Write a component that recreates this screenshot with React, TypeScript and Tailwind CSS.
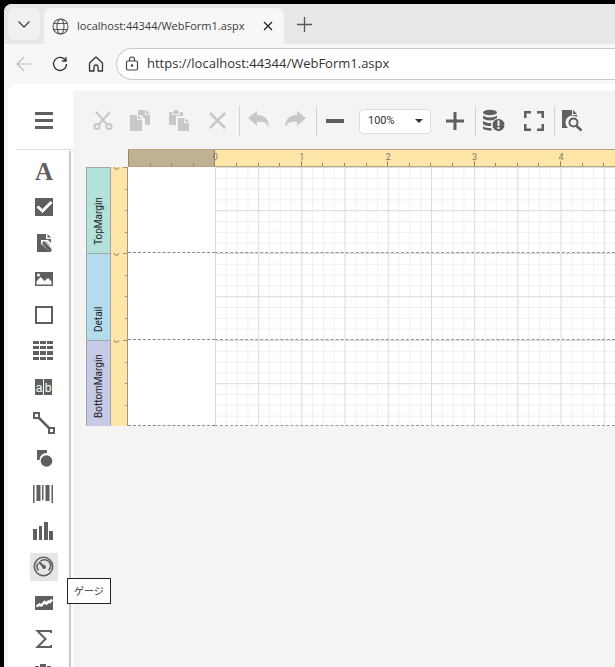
import type { ReactNode } from "react";

type IconProps = { children: ReactNode };

function Icon({ children }: IconProps) {
  return (
    <svg
      aria-hidden="true"
      width="28"
      height="28"
      viewBox="0 0 28 28"
      fill="currentColor"
      className="shrink-0"
    >
      {children}
    </svg>
  );
}

const tools: { label: string; icon: ReactNode }[] = [
  {
    label: "ラベル",
    icon: (
      <text x="14" y="23" textAnchor="middle" className="font-['Liberation_Serif',serif] text-[25px] font-bold">
        A
      </text>
    ),
  },
  {
    label: "チェックボックス",
    icon: (
      <>
        <path d="M5 5h18v18H5z" />
        <path d="M7.500 13.500l5 4.500 9-9" fill="none" stroke="#fff" strokeWidth="3" />
      </>
    ),
  },
  {
    label: "リッチテキスト",
    icon: (
      <>
        <path d="M7 5h9v5h5v13H7z" />
        <path d="M17.500 5l3.500 3.500h-3.500z" />
        <path d="M11 11h7l5 5v7h-2L11 15z" fill="#fff" />
        <path d="M12.500 12.500h4l5 6.500v3.500h-1.500l-7.500-7z" />
        <path d="M15 12.500l7 7.500" stroke="#fff" strokeWidth="1" />
      </>
    ),
  },
  {
    label: "ピクチャボックス",
    icon: (
      <>
        <path d="M5 7h18v14H5z" />
        <path d="M6.500 19.500v-3l4-4.500 4 4 3.500-3 3.500 3.500v3z" fill="#fff" />
        <circle cx="8.500" cy="10" r="1.500" fill="#fff" />
      </>
    ),
  },
  { label: "パネル", icon: <path d="M6 6h16v16H6z" fill="none" stroke="currentColor" strokeWidth="2" /> },
  {
    label: "テーブル",
    icon: (
      <path d="M3 4h6v3H3zM10 4h6v3h-6zM17 4h6v3h-6zM3 9h6v3H3zM10 9h6v3h-6zM17 9h6v3h-6zM3 14h6v4H3zM10 14h6v4h-6zM17 14h6v4h-6zM3 20h6v3H3zM10 20h6v3h-6zM17 20h6v3h-6z" />
    ),
  },
  {
    label: "文字コーム",
    icon: (
      <>
        <path d="M5 6h8v16H5zM14 6h8v16h-8z" />
        <g fill="#fff" textAnchor="middle" className="font-['Liberation_Sans',sans-serif] text-[12px]">
          <text x="9" y="19">a</text>
          <text x="18" y="19">b</text>
        </g>
      </>
    ),
  },
  {
    label: "ライン",
    icon: (
      <g fill="none" stroke="currentColor" strokeWidth="2">
        <path d="M4 4h5v5H4zM19 19h5v5h-5z" />
        <path d="M9 9l10 10" strokeWidth="2.500" />
      </g>
    ),
  },
  {
    label: "シェイプ",
    icon: (
      <>
        <path d="M7 5h10v3a7 7 0 0 0-7.500 7H7z" />
        <circle cx="16.500" cy="16" r="5.800" />
      </>
    ),
  },
  {
    label: "バーコード",
    icon: <path d="M3 4h1.500v18H3zM6.500 4h4v16h-4zM12 4h1.500v15H12zM15.500 4h4v16h-4zM21.500 4H23v18h-1.500z" />,
  },
  {
    label: "チャート",
    icon: <path d="M3 12h4v11H3zM9 9h3v14H9zM14 5h4v18h-4zM19 14h4v9h-4z" />,
  },
  {
    label: "ゲージ",
    icon: (
      <g fill="none" stroke="currentColor" strokeWidth="1.600">
        <circle cx="13.500" cy="13.500" r="9.200" />
        <path d="M8.500 17.500a6 6 0 0 1-.5-7M10.500 8.200a6 6 0 0 1 8 9.300" />
        <path d="M9 9l5 5" strokeWidth="2.400" />
        <circle cx="14" cy="14" r="1.200" fill="currentColor" />
      </g>
    ),
  },
  {
    label: "スパークライン",
    icon: (
      <>
        <path d="M5 7h18v14H5z" />
        <path d="M6.500 17.500l3-2 2 1 3-3.500 2 1.500 2-2 1.500.5 2-2.500" fill="none" stroke="#fff" strokeWidth="2.600" />
      </>
    ),
  },
  {
    label: "ピボットグリッド",
    icon: <path d="M21 8V6H7.500l8 8-8 8H21v-2" fill="none" stroke="currentColor" strokeWidth="2" />,
  },
  { label: "サブレポート", icon: <path d="M10 3h6v4h-6zM5 5h4v4H5zM17 5h4v4h-4zM4 10h18v12H4z" /> },
];

type ToolButtonProps = { label: string; muted?: boolean; children: ReactNode };

function ToolButton({ label, muted = false, children }: ToolButtonProps) {
  return (
    <button
      type="button"
      aria-label={label}
      disabled={muted}
      className={muted ? "text-[#c8c8c8]" : "text-[#5f5f5f]"}
    >
      <Icon>{children}</Icon>
    </button>
  );
}

function Separator() {
  return <span className="h-[30px] w-px bg-[#d3d3d3]" />;
}

function BrowserChrome() {
  return (
    <header className="shrink-0 font-['Open_Sans','Noto_Sans',sans-serif]">
      <div className="flex h-10 items-end bg-[#e8e8e8]">
        <div className="self-stretch rounded-br-lg pt-1 pl-1">
          <button
            type="button"
            aria-label="タブ検索"
            className="flex h-8 w-8 items-center justify-center rounded-lg bg-[#f1f1f1] text-[#444]"
          >
            <svg width="14" height="14" viewBox="0 0 14 14" fill="none" stroke="currentColor" strokeWidth="1.300">
              <path d="M1.500 4.500L7 10l5.500-5.500" />
            </svg>
          </button>
        </div>
        <div className="ml-1 flex h-9 w-60 items-center rounded-t-lg bg-[#f7f7f7] px-2">
          <svg width="17" height="17" viewBox="0 0 17 17" fill="none" stroke="#555" strokeWidth="1.100" className="shrink-0">
            <circle cx="8.500" cy="8.500" r="7.500" />
            <ellipse cx="8.500" cy="8.500" rx="3.500" ry="7.500" />
            <path d="M1.700 5.500h13.600M1.700 11.500h13.600" />
          </svg>
          <span className="ml-2 flex-1 text-[11px] whitespace-nowrap text-[#3b3b3b]">localhost:44344/WebForm1.aspx</span>
          <button type="button" aria-label="タブを閉じる" className="flex h-4 w-4 items-center justify-center">
            <svg width="10" height="10" viewBox="0 0 10 10" stroke="#222" strokeWidth="1.300">
              <path d="M1 1l8 8M9 1L1 9" />
            </svg>
          </button>
        </div>
        <button type="button" aria-label="新しいタブ" className="flex h-10 w-10 items-center justify-center">
          <svg width="15" height="15" viewBox="0 0 15 15" stroke="#555" strokeWidth="1.300">
            <path d="M7.500 0v15M0 7.500h15" />
          </svg>
        </button>
      </div>

      <div className="flex h-10 items-center">
        <div className="flex w-28 shrink-0 items-center justify-between px-3">
          <button type="button" aria-label="戻る" disabled>
            <svg width="16" height="16" viewBox="0 0 16 16" fill="none" stroke="#bdbdbd" strokeWidth="1.200">
              <path d="M16 8H1M8 1L1 8l7 7" />
            </svg>
          </button>
          <button type="button" aria-label="更新">
            <svg width="16" height="16" viewBox="0 0 16 16" fill="none" stroke="#333" strokeWidth="1.300">
              <path d="M13.500 4.500A6.500 6.500 0 1 0 14.500 8M14 1v4h-4" />
            </svg>
          </button>
          <button type="button" aria-label="ホーム">
            <svg width="16" height="16" viewBox="0 0 16 16" fill="none" stroke="#333" strokeWidth="1.300" strokeLinejoin="round">
              <path d="M1.500 7L8 1l6.500 6v8H10v-4a2 2 0 0 0-4 0v4H1.500z" />
            </svg>
          </button>
        </div>
        <label className="flex h-8 flex-1 items-center rounded-l-full border border-r-0 border-[#c9c9c9] bg-white pl-2">
          <svg width="14" height="16" viewBox="0 0 14 16" fill="none" stroke="#444" strokeWidth="1.200">
            <rect x="1.500" y="5" width="11" height="9" rx="1.500" />
            <path d="M4.500 5V3.500a2.500 2.500 0 0 1 5 0V5" />
            <circle cx="7" cy="9.500" r=".7" fill="#444" />
          </svg>
          <input
            aria-label="アドレス"
            defaultValue="https://localhost:44344/WebForm1.aspx"
            className="ml-2 min-w-0 flex-1 bg-transparent text-[13px] text-[#333] outline-none"
          />
        </label>
      </div>
    </header>
  );
}

function Toolbox() {
  return (
    <nav aria-label="ツールボックス" className="flex w-[65px] shrink-0 flex-col">
      <div className="ml-2 flex h-[66px] shrink-0 items-center border-b border-[#dedede] pt-2 pl-3.5">
        <ToolButton label="メニュー">
          <path d="M5 5h18v3H5zM5 12h18v3H5zM5 19h18v3H5z" />
        </ToolButton>
      </div>
      <div className="mt-px mr-0.5 flex min-h-0 flex-1 flex-col gap-2 border-r-2 border-[#c8c8c8] pt-1.5 pl-[22px]">
        {tools.map((tool) => (
          <button
            key={tool.label}
            type="button"
            aria-label={tool.label}
            className={
              tool.label === "ゲージ"
                ? "h-7 w-7 shrink-0 bg-[#e6e6e6] text-[#5f5f5f]"
                : "h-7 w-7 shrink-0 text-[#5f5f5f]"
            }
          >
            <Icon>{tool.icon}</Icon>
          </button>
        ))}
      </div>
    </nav>
  );
}

function Toolbar() {
  return (
    <div className="flex h-[58px] shrink-0 items-center pt-0.5 pl-4">
      <div className="flex gap-2.5">
        <ToolButton label="切り取り" muted>
          <g fill="none" stroke="currentColor" strokeWidth="2">
            <circle cx="8" cy="19.500" r="2.600" />
            <circle cx="20" cy="19.500" r="2.600" />
            <path d="M7 5l11.500 13M21 5L9.500 18" />
          </g>
        </ToolButton>
        <ToolButton label="コピー" muted>
          <path d="M11 3h7v5h5v10h-5v-6l-4-4h-3z" />
          <path d="M19 3l4 4h-4zM3 8h7v5h5v11H3zM11 8l4 4h-4z" />
        </ToolButton>
        <ToolButton label="貼り付け" muted>
          <path d="M4 5h3v3h8V5h3v4h-7v9H4zM9 3h4v2h1v2H8V5h1z" />
          <path d="M13 11h6v5h5v8H13zM20 11l4 4h-4z" />
        </ToolButton>
        <ToolButton label="削除" muted>
          <path d="M7 6l15 15M22 6L7 21" fill="none" stroke="currentColor" strokeWidth="2.500" />
        </ToolButton>
      </div>
      <div className="mr-1 ml-2 flex items-center gap-2">
        <Separator />
        <div className="flex gap-2">
          <ToolButton label="元に戻す" muted>
            <path d="M0 11l9-7v4c7 0 12 4 12 12-3-5-6-6-12-5v4z" />
          </ToolButton>
          <ToolButton label="やり直し" muted>
            <path d="M22 11l-9-7v4C6 8 1 12 1 20c3-5 6-6 12-5v4z" />
          </ToolButton>
        </div>
      </div>
      <Separator />
      <div className="flex items-center gap-2.5 pr-1.5 pl-1">
        <ToolButton label="縮小">
          <path d="M5 12h18v4H5z" />
        </ToolButton>
        <div className="relative">
          <select
            aria-label="ズーム"
            defaultValue="100%"
            className="block h-[25px] w-[72px] appearance-none rounded-sm border border-[#ddd] bg-white pl-2 font-['Roboto',sans-serif] text-[11px] text-[#333]"
          >
            <option>100%</option>
          </select>
          <svg aria-hidden="true" width="8" height="4" viewBox="0 0 8 4" className="pointer-events-none absolute top-2.5 right-2">
            <path d="M0 0h8L4 4z" fill="#333" />
          </svg>
        </div>
        <ToolButton label="拡大">
          <path d="M12.500 5h3v7.500H23v3h-7.500V23h-3v-7.500H5v-3h7.500z" />
        </ToolButton>
      </div>
      <Separator />
      <div className="flex gap-3 pr-1.5 pl-1">
        <ToolButton label="検証">
          <ellipse cx="10" cy="5.500" rx="7" ry="2.800" />
          <path d="M3 8.500c3 2.500 11 2.500 14 0v3c-3 2.500-11 2.500-14 0zM3 14c2 1.500 5 2 8 2v3c-4 0-7-.500-8-2zM3 19.500c2 1.500 5 1.500 8 1.500l1 2.500c-4 0-8-.500-9-2z" />
          <circle cx="18.500" cy="18" r="6.500" stroke="#f4f4f4" />
          <path d="M17.500 13.500h2v5.500h-2zM17.500 20h2v2h-2z" fill="#f4f4f4" />
        </ToolButton>
        <ToolButton label="全画面表示">
          <path d="M4 4h7v2.500H6.500V11H4zM17 4h7v7h-2.500V6.500H17zM4 17h2.500v4.500H11V24H4zM21.500 17H24v7h-7v-2.500h4.500z" />
        </ToolButton>
      </div>
      <Separator />
      <ToolButton label="プレビュー">
        <path d="M7 3h10v5h5v2a7 7 0 0 0-9 11H7zM18 3l4 4h-4z" />
        <g fill="none" stroke="currentColor" strokeWidth="2">
          <circle cx="18.500" cy="15.500" r="4" />
          <path d="M21 18.500l5.500 5" strokeWidth="2.500" />
        </g>
      </ToolButton>
    </div>
  );
}

const inch = 86.4;
const gutter = 128;

function HorizontalRuler() {
  const visible = window.innerWidth - gutter;
  const labelCount = Math.floor((visible - 6) / inch);
  const markCount = Math.floor((visible * 4) / inch);

  return (
    <div className="ml-[42px] flex h-[18px] border-y border-[#b5a583] bg-[#fee6a8]">
      <svg aria-hidden="true" width="100%" height="16">
        <path d="M0 0h87v16H0z" fill="#bfb293" />
        <path d="M.5 0v16M86.500 0v16" stroke="#94886c" />
        {Array.from({ length: markCount }, (_, i) => i + 1).map((n) => (
          <path
            key={n}
            d={n % 4 === 0 ? `M${Math.round((n * inch) / 4)}.5 11v5` : `M${Math.round((n * inch) / 4)}.5 13v3`}
            stroke="#938465"
          />
        ))}
        <g fill="#7f776a" textAnchor="middle" className="font-['Roboto',sans-serif] text-[9px]">
          {Array.from({ length: labelCount }, (_, i) => (
            <text key={i} x={(i + 1) * inch + 1} y="10">
              {i}
            </text>
          ))}
        </g>
      </svg>
    </div>
  );
}

const bands = [
  { name: "TopMargin", color: "bg-[#b3e2dc]", height: "h-[86px]" },
  { name: "Detail", color: "bg-[#b3dcef]", height: "h-[87px]" },
  { name: "BottomMargin", color: "bg-[#c5cae6]", height: "h-[86px]" },
];

type BandProps = { name: string; color: string; height: string };

function Band({ name, color, height }: BandProps) {
  return (
    <section className={`flex ${height}`}>
      <h2
        className={`flex w-[25px] shrink-0 rotate-180 items-center justify-start border border-t-0 border-[#a5a5a5] pt-2 font-['Roboto',sans-serif] text-[10px] text-[#222] [writing-mode:vertical-rl] ${color}`}
      >
        {name}
      </h2>
      <svg aria-hidden="true" width="17" height="100%" className="shrink-0 bg-[#fee6a8]">
        <path d="M14 22.500h3M14 43.500h3M14 65.500h3M12 .5h5M16.500 0v87" stroke="#a39370" />
        <ellipse cx="5.500" cy=".5" rx="2.200" ry="1.800" fill="none" stroke="#8d8069" />
      </svg>
      <div className="w-[87px] shrink-0 border-b border-dashed border-[#888] bg-white" />
      <div className="min-w-0 flex-1 border-b border-dashed border-[#999] bg-white">
        <svg aria-hidden="true" width="100%" height="100%" className="block">
          <defs>
            <pattern id={`grid-${name}`} width="43.200" height="43.200" patternUnits="userSpaceOnUse">
              <path d="M11.300 0v43.200M22.100 0v43.200M32.900 0v43.200M0 11.300h43.200M0 22.100h43.200M0 32.900h43.200" stroke="#f0f0f0" />
              <path d="M.5 0v43.200M0 .5h43.200" stroke="#dadada" />
            </pattern>
          </defs>
          <rect width="100%" height="100%" fill={`url(#grid-${name})`} />
        </svg>
      </div>
    </section>
  );
}

function Designer() {
  return (
    <main className="mt-[7px] flex min-w-0 flex-1 flex-col bg-[#f4f4f4]">
      <Toolbar />
      <div className="pl-[13px]">
        <HorizontalRuler />
        {bands.map((band) => (
          <Band key={band.name} {...band} />
        ))}
      </div>
    </main>
  );
}

export default function App() {
  return (
    <div className="h-screen overflow-hidden bg-black pt-1 pl-1">
      <div className="flex h-full flex-col overflow-hidden rounded-tl-lg bg-[#f7f7f7]">
        <BrowserChrome />
        <div className="relative ml-1 flex min-h-0 flex-1 overflow-hidden rounded-tl-lg bg-white">
          <Toolbox />
          <Designer />
          <div
            role="tooltip"
            className="absolute top-[494px] left-[59px] border border-[#222] bg-white px-1.5 py-1 font-['Noto_Sans_CJK_JP',sans-serif] text-[10px] leading-4 text-[#333]"
          >
            ゲージ
          </div>
        </div>
      </div>
    </div>
  );
}
